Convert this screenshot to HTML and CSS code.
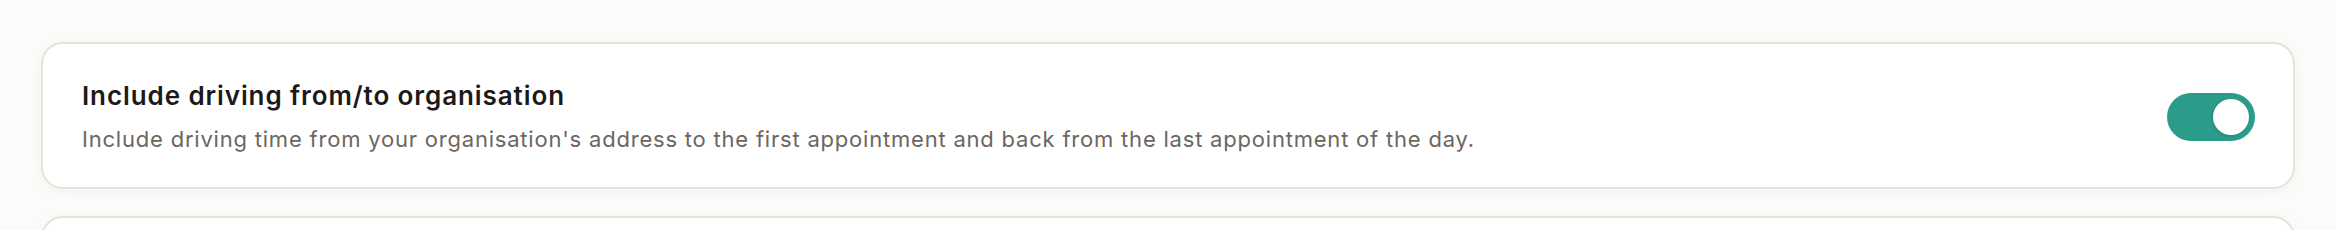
FILE: index.html
```html
<!DOCTYPE html>
<html lang="en">
<head>
  <meta charset="UTF-8">
  <meta name="viewport" content="width=device-width, initial-scale=1.0">
  <title>Scheduling settings</title>
  <link rel="stylesheet" href="styles.css">
</head>
<body>
  <div class="settings">
    <div class="setting-card">
      <div class="setting-text">
        <h3 class="setting-title">Include driving from/to organisation</h3>
        <p class="setting-desc">Include driving time from your organisation's address to the first appointment and back from the last appointment of the day.</p>
      </div>
      <button class="toggle toggle-on" aria-pressed="true"><span class="toggle-knob"></span></button>
    </div>
    <!-- next setting, only its top edge shows -->
    <div class="setting-card setting-card-next"></div>
  </div>
</body>
</html>
```

FILE: styles.css
```css
:root {
  --page-bg: #fbfbfa;
  --card-bg: #ffffff;
  --card-border: #e8e2d8;
  --title-color: #1b1a19;
  --desc-color: #6c6661;
  --accent: #2b9c8a;
}

body {
  margin: 0;
  background: var(--page-bg);
  font-family: 'Inter', 'Noto Sans', sans-serif;
}

.settings {
  display: flex;
  flex-direction: column;
  gap: 27px;
  padding: 42px 41px;
}

.setting-card {
  display: flex;
  align-items: center;
  justify-content: space-between;
  gap: 40px;
  padding: 35px 38px 33px 39px;
  background: var(--card-bg);
  border: 2px solid var(--card-border);
  border-radius: 22px;
  box-shadow: 0 2px 14px rgba(0, 0, 0, 0.04);
}

.setting-card-next {
  min-height: 80px;
}

.setting-title {
  margin: 0;
  font-size: 26px;
  line-height: 34px;
  font-weight: 600;
  letter-spacing: 0.035em;
  color: var(--title-color);
}

.setting-desc {
  margin: 11px 0 0;
  font-size: 22px;
  line-height: 30px;
  letter-spacing: 0.036em;
  color: var(--desc-color);
}

.toggle {
  flex-shrink: 0;
  width: 88px;
  height: 48px;
  padding: 6px;
  border: none;
  border-radius: 24px;
  background: #d9d4cc;
  cursor: pointer;
  display: flex;
}

.toggle-on {
  background: var(--accent);
  justify-content: flex-end;
}

.toggle-knob {
  width: 36px;
  height: 36px;
  border-radius: 50%;
  background: #fff;
  box-shadow: -1px 1px 3px rgba(0, 0, 0, 0.15);
}
```
